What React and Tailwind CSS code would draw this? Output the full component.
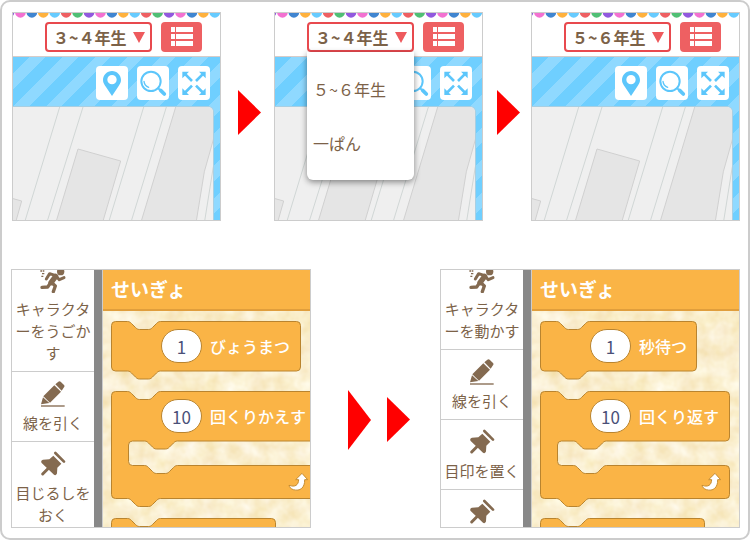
import { useId } from 'react'

const BUNTING = ['#9159de', '#f371d1', '#4085d0', '#ffb13d', '#66cbff', '#ee5f62', '#50bf74']

function Bunting() {
  return (
    <svg viewBox="39 39 621 15" preserveAspectRatio="xMidYMin slice" className="block h-[5px] w-full">
      {Array.from({ length: 19 }, (_, i) => (
        <circle key={i} cx={27 + i * 34.3} cy="37" r="16" fill={BUNTING[i % 7]} />
      ))}
    </svg>
  )
}

function ListIcon() {
  return (
    <svg width="22" height="20" viewBox="0 0 22 20" fill="#fff">
      <path d="M0 0h4v5H0zM5 0h17v5H5zM0 7h4v5H0zM5 7h17v5H5zM0 14h4v5H0zM5 14h17v5H5z" />
    </svg>
  )
}

function PinIcon() {
  return (
    <svg width="32" height="34" viewBox="0 0 96 102">
      <path
        d="M48 15c-15 0-27 12-27 27 0 8 4 14 9 21l18 27 18-27c5-7 9-13 9-21 0-15-12-27-27-27zm0 12a14 14 0 1 1 0 28 14 14 0 0 1 0-28z"
        fill="#5cc6fb"
        fillRule="evenodd"
      />
    </svg>
  )
}

function SearchIcon() {
  return (
    <svg width="32" height="34" viewBox="0 0 96 102" fill="none" stroke="#5cc6fb" strokeLinecap="round">
      <circle cx="42" cy="46" r="29" strokeWidth="6" />
      <path d="M21 46c1 9 6 15 14 18" strokeWidth="4" />
      <path d="M64 67l8 8" strokeWidth="6" />
      <path d="M71 73l11 11" strokeWidth="11" />
    </svg>
  )
}

function ExpandIcon() {
  return (
    <svg width="32" height="34" viewBox="0 0 96 102">
      <path d="M20 23l22 22M76 23L54 45M20 81l22-22M76 81L54 59" stroke="#5cc6fb" strokeWidth="8" />
      <path d="M13 17h20L13 37zM83 17H63l20 20zM13 87h20L13 67zM83 87H63l20-20z" fill="#5cc6fb" />
    </svg>
  )
}

function StreetMap() {
  return (
    <svg
      viewBox="39 321 600 339"
      preserveAspectRatio="xMaxYMin slice"
      className="block h-full w-full bg-[#efefef]"
    >
      <g fill="none" stroke="#d0d6d5" strokeWidth="3">
        <path d="M180 318L75 663M250 318L142 663M432 318L327 663M500 318L394 663M640 500L614 663" />
      </g>
      <g fill="#e5e5e5" stroke="#d0d0d0" strokeWidth="3">
        <path d="M234 447L362 483 309 663H169z" />
        <path d="M36 595l29 8-17 60H36z" />
        <path d="M528 318h114v94l-29 103-24 148H424z" />
      </g>
    </svg>
  )
}

const TOOLS = [
  { label: 'ピン', Icon: PinIcon },
  { label: '拡大', Icon: SearchIcon },
  { label: '全画面', Icon: ExpandIcon },
]

function GradePanel({ grade, menu }) {
  const id = useId()
  return (
    <section className="flex h-[209px] min-w-0 flex-1 flex-col overflow-hidden border border-[#ccc] bg-white">
      <Bunting />
      <div className="flex justify-end gap-[9px] border-b border-[#d8ccc8] py-1 pr-[18px]">
        <div className="relative">
          <label
            htmlFor={id}
            className="flex h-[30px] w-[107px] items-center rounded border-2 border-[#e8494e] bg-white pl-[6px]"
          >
            <select
              id={id}
              aria-label="学年"
              defaultValue={grade}
              className="w-20 appearance-none bg-transparent text-base leading-6 font-bold text-[#7c6248] outline-none"
            >
              <option>{grade}</option>
            </select>
            <svg width="12" height="12" viewBox="0 0 12 12" className="shrink-0">
              <path d="M0 1h12L6 12z" fill="#ee5a5d" />
            </svg>
          </label>
          {menu && (
            <ul className="absolute top-[30px] left-0 z-10 flex w-[107px] flex-col gap-[30px] rounded-b-md bg-white py-[25px] pl-[6px] text-base leading-6 text-[#7c6248] shadow-[0_2px_6px_rgba(0,0,0,0.45)]">
              {menu.map((item) => (
                <li key={item}>
                  <button type="button">{item}</button>
                </li>
              ))}
            </ul>
          )}
        </div>
        <button
          type="button"
          aria-label="メニュー"
          className="flex h-[30px] w-[41px] items-center justify-center rounded bg-[#ee6062]"
        >
          <ListIcon />
        </button>
      </div>
      <div className="flex flex-1 flex-col bg-[repeating-linear-gradient(135deg,#6fcfff_0_12px,#8fd9ff_12px_23px)]">
        <div className="flex justify-end gap-[9px] pt-[9px] pr-[10px] pb-[6px]">
          {TOOLS.map(({ label, Icon }) => (
            <button key={label} type="button" aria-label={label} className="h-[34px] w-8 rounded bg-white">
              <Icon />
            </button>
          ))}
        </div>
        <div className="mr-[6px] min-h-0 flex-1 overflow-hidden rounded-tr-md border-t border-r border-[#a9cfe2]">
          <StreetMap />
        </div>
      </div>
    </section>
  )
}

function RunnerIcon() {
  return (
    <svg width="26" height="26" viewBox="0 0 78 78" fill="none" stroke="#846a50" strokeLinecap="round" strokeLinejoin="round">
      <circle cx="62" cy="14" r="11" fill="#846a50" stroke="none" />
      <path d="M19 36l10-16 18 6 11 12 14-6" strokeWidth="9" />
      <path d="M47 28L33 47" strokeWidth="16" />
      <path d="M30 50l-7 10-17 1" strokeWidth="10" />
      <path d="M34 46l12 11-6 17" strokeWidth="10" />
      <path d="M1 12h12M6 20h9M4 28h7" strokeWidth="4" strokeLinecap="butt" strokeDasharray="6 2" />
    </svg>
  )
}

function PencilIcon() {
  return (
    <svg width="26" height="26" viewBox="0 0 78 78" fill="#846a50">
      <path d="M43 13l20 19-33 33-20-19z" />
      <path d="M46 10l9-8c2-2 5-2 7 0l10 10c2 2 2 5 0 7l-7 10z" />
      <path d="M9 49l19 17-25 4z" />
      <path d="M3 73h71v4H3z" />
    </svg>
  )
}

function ThumbtackIcon() {
  return (
    <svg width="26" height="26" viewBox="0 0 78 78" fill="#846a50">
      <path d="M40 14l24 24-12 12-1 17c-1 5-6 7-9 4L5 36c-3-4-1-9 4-10l19-1z" />
      <path d="M26 51L8 69" stroke="#846a50" strokeWidth="9" strokeLinecap="round" />
      <path d="M46 6l26 26" stroke="#846a50" strokeWidth="8" strokeLinecap="round" />
    </svg>
  )
}

function Category({ Icon, label }) {
  return (
    <li className="border-b border-[#ccc]">
      <button
        type="button"
        aria-label={label ? undefined : 'しらべる'}
        className="flex w-full flex-col items-center gap-[5px] pt-[9px] pb-[7px] text-[15px] leading-[22px] text-[#7c6248]"
      >
        <Icon />
        {label && <span className="w-[76px] [line-break:anywhere]">{label}</span>}
      </button>
    </li>
  )
}

const notch = 'h12c2 0 3 1 4 2l4 4c1 1 2 2 4 2h9c2 0 3-1 4-2l4-4c1-1 2-2 4-2'
const bump = 'c-2 0-3 1-4 2l-4 4c-1 1-2 2-4 2h-9c-2 0-3-1-4-2l-4-4c-1-1-2-2-4-2'

function stackPath(w) {
  return `M.5 4.5a4 4 0 0 1 4-4${notch}H${w - 4.5}a4 4 0 0 1 4 4V46a4 4 0 0 1-4 4H49.5${bump}H4.5a4 4 0 0 1-4-4z`
}

function loopPath(w) {
  return (
    `M.5 4.5a4 4 0 0 1 4-4${notch}H${w - 4.5}a4 4 0 0 1 4 4V46a4 4 0 0 1-4 4H66.5${bump}H21.5a4 4 0 0 0-4 4` +
    `V70.5a4 4 0 0 0 4 4${notch}H${w - 4.5}a4 4 0 0 1 4 4V103.5a4 4 0 0 1-4 4H49.5${bump}H4.5a4 4 0 0 1-4-4z`
  )
}

function BlockShape({ d, width, height }) {
  return (
    <svg width={width} height={height} className="absolute top-0 left-0 max-w-none">
      <path d={d} fill="#fab446" stroke="#b9842f" />
    </svg>
  )
}

function BlockFace({ value, label }) {
  return (
    <label className="relative flex h-[50px] items-center gap-2 pl-[50px] text-base leading-6 font-medium whitespace-nowrap text-white">
      <input
        type="text"
        defaultValue={value}
        className="h-[34px] w-[41px] shrink-0 rounded-full border border-[#b9842f] bg-white text-center text-[17px] font-normal text-[#4a5078]"
      />
      {label}
    </label>
  )
}

function Paper() {
  const id = useId()
  return (
    <svg className="absolute inset-0 h-full w-full">
      <filter id={id} x="0" y="0" width="100%" height="100%" colorInterpolationFilters="sRGB">
        <feTurbulence type="fractalNoise" baseFrequency="0.06" numOctaves="3" seed="8" />
        <feColorMatrix values="0.06 0 0 0 0.95  0.14 0 0 0 0.865  0.3 0.08 0 0 0.62  0 0 0 0 1" />
      </filter>
      <rect width="100%" height="100%" filter={`url(#${id})`} />
    </svg>
  )
}

function BlocksPanel({ categories, wait, repeat }) {
  return (
    <section className="flex h-[259px] min-w-0 flex-1 overflow-hidden border border-[#ccc] bg-white">
      <ul className="-mt-3 w-[82px] shrink-0">
        {categories.map((c, i) => (
          <Category key={i} {...c} />
        ))}
      </ul>
      <div className="w-2 shrink-0 bg-[#888]" />
      <div className="flex min-w-0 flex-1 flex-col border-l border-[#ccc]">
        <h2 className="border-b-2 border-[#e09e3c] bg-[#fab446] pt-[5px] pb-[6px] pl-2 text-[19px] leading-7 font-bold text-white">
          せいぎょ
        </h2>
        <div className="relative min-h-0 flex-1 overflow-hidden">
          <Paper />
          <div className="flex flex-col gap-3 pt-[10px] pl-2">
            <div className="relative h-[58px]">
              <BlockShape d={stackPath(wait.width)} width={wait.width} height={59} />
              <BlockFace value="1" label={wait.label} />
            </div>
            <div className="relative h-[115px]">
              <BlockShape d={loopPath(repeat.width)} width={repeat.width} height={116} />
              <BlockFace value="10" label={repeat.label} />
              <div className="relative flex justify-end pt-[32px] pr-[9px]" style={{ width: repeat.width }}>
                <svg width="20" height="18" viewBox="0 0 60 54">
                  <path
                    d="M3 37c18 6 28 0 29-17h-9L42 1l17 19h-9c1 24-14 36-34 30C8 47 4 42 3 37z"
                    fill="#fff"
                    stroke="#c58b2f"
                    strokeWidth="3"
                    strokeLinejoin="round"
                  />
                </svg>
              </div>
            </div>
            <div className="relative h-[58px]">
              <BlockShape d={stackPath(165)} width={165} height={59} />
            </div>
          </div>
        </div>
      </div>
    </section>
  )
}

function Arrow({ tall }) {
  return (
    <svg
      width="23"
      height={tall ? 60 : 45}
      viewBox="0 0 23 60"
      preserveAspectRatio="none"
      className="shrink-0"
      fill="#f00"
    >
      <path d="M0 0l23 30L0 60z" />
    </svg>
  )
}

export default function App() {
  return (
    <main
      lang="ja"
      className="rounded-[10px] border-2 border-[#ccc] bg-white pt-[10px] pr-2 pb-[10px] pl-[9px] font-['Noto_Sans_CJK_JP',sans-serif]"
    >
      <div className="flex pl-px">
        <GradePanel grade="３~４年生" />
        <div className="flex w-[53px] shrink-0 items-center pb-2 pl-[17px]">
          <Arrow />
        </div>
        <GradePanel grade="３~４年生" menu={['５~６年生', '一ぱん']} />
        <div className="flex w-12 shrink-0 items-center pb-2 pl-[14px]">
          <Arrow />
        </div>
        <GradePanel grade="５~６年生" />
      </div>
      <div className="mt-12 flex">
        <BlocksPanel
          categories={[
            { Icon: RunnerIcon, label: 'キャラクターをうごかす' },
            { Icon: PencilIcon, label: '線を引く' },
            { Icon: ThumbtackIcon, label: '目じるしをおく' },
          ]}
          wait={{ label: 'びょうまつ', width: 190 }}
          repeat={{ label: '回くりかえす', width: 206 }}
        />
        <div className="flex w-[129px] shrink-0 items-center gap-4 pt-[42px] pl-[37px]">
          <Arrow tall />
          <Arrow />
        </div>
        <BlocksPanel
          categories={[
            { Icon: RunnerIcon, label: 'キャラクターを動かす' },
            { Icon: PencilIcon, label: '線を引く' },
            { Icon: ThumbtackIcon, label: '目印を置く' },
            { Icon: ThumbtackIcon },
          ]}
          wait={{ label: '秒待つ', width: 157 }}
          repeat={{ label: '回くり返す', width: 190 }}
        />
      </div>
    </main>
  )
}
